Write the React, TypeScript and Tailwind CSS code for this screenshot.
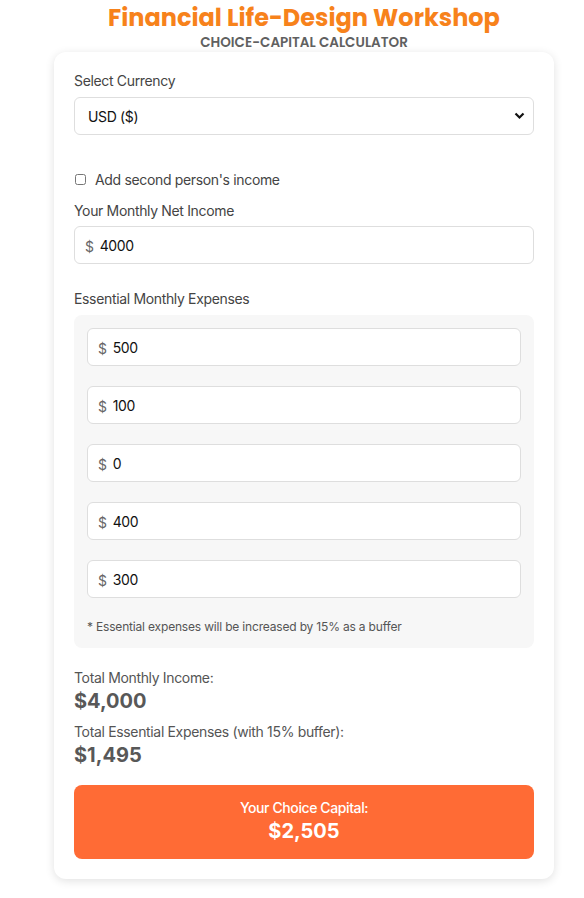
import { useState } from "react";

const expenses = ["500", "100", "0", "400", "300"];

const MoneyInput = ({ value }: { value: string }) => (
  <div className="flex items-center h-[38px] bg-white border border-[#dedede] rounded-md pl-[10px]">
    <span className="text-[14px] text-[#666] mt-[2px] mr-[6px]">$</span>
    <input
      defaultValue={value}
      className="flex-1 h-full bg-transparent outline-none text-[14px] text-[#111]"
    />
  </div>
);

export default function App() {
  const [currency, setCurrency] = useState("USD");

  return (
    <div className="w-[584px] min-h-[898px] bg-white font-['Inter',sans-serif] text-[#333]">
      <div className="mx-[54px] w-[500px] flex flex-col items-center pt-[4px]">
        <h1 className="text-[24px] leading-[28px] font-bold text-[#f7821b] font-['Poppins','Inter',sans-serif]">
          Financial Life-Design Workshop
        </h1>
        <p className="mt-[3px] text-[13.5px] leading-[16px] font-semibold text-[#606060] font-['Poppins','Inter',sans-serif]">
          CHOICE-CAPITAL CALCULATOR
        </p>
      </div>

      <div className="mx-[54px] mt-[1px] w-[500px] bg-white rounded-xl shadow-[0_2px_10px_rgba(0,0,0,0.12)] px-[20px] pt-[20px] pb-[20px] tracking-[-0.34px]">
        <label className="block text-[14px] leading-[18px] text-[#444] mb-[7px]">Select Currency</label>
        <div className="relative">
          <select
            value={currency}
            onChange={(e) => setCurrency(e.target.value)}
            className="w-full h-[38px] appearance-none bg-white border border-[#dedede] rounded-md pl-[13px] text-[14px] text-[#111] outline-none"
          >
            <option value="USD">USD ($)</option>
            <option value="EUR">EUR (€)</option>
            <option value="GBP">GBP (£)</option>
          </select>
          <svg className="absolute right-[9px] top-[15px] pointer-events-none" width="11" height="8" viewBox="0 0 11 8">
            <path d="M1.5 1.5 L5.5 5.5 L9.5 1.5" fill="none" stroke="#111" strokeWidth="2.2" />
          </svg>
        </div>

        <label className="flex items-center mt-[34px] text-[14px] text-[#444]">
          <input type="checkbox" className="w-[11px] h-[11px] ml-[1px] mr-[9px]" />
          Add second person's income
        </label>

        <label className="block text-[14px] leading-[18px] text-[#444] mt-[12px] mb-[6px]">Your Monthly Net Income</label>
        <MoneyInput value="4000" />

        <label className="block text-[14px] leading-[18px] text-[#444] mt-[26px] mb-[7px]">Essential Monthly Expenses</label>
        <div className="bg-[#f7f7f7] rounded-lg px-[13px] pt-[13px] pb-[13px]">
          <div className="flex flex-col gap-[20px]">
            {expenses.map((v, i) => (
              <MoneyInput key={i} value={v} />
            ))}
          </div>
          <p className="text-[12px] leading-[16px] text-[#555] mt-[21px] tracking-[-0.18px]">
            * Essential expenses will be increased by 15% as a buffer
          </p>
        </div>

        <div className="mt-[21px]">
          <p className="text-[14px] leading-[18px] text-[#555]">Total Monthly Income:</p>
          <p className="text-[20px] leading-[28px] font-bold text-[#585858] tracking-normal">$4,000</p>
          <p className="text-[14px] leading-[18px] text-[#555] mt-[8px]">Total Essential Expenses (with 15% buffer):</p>
          <p className="text-[20px] leading-[28px] font-bold text-[#585858] tracking-normal">$1,495</p>
        </div>

        <div className="mt-[16px] h-[74px] bg-[#ff6b35] rounded-lg flex flex-col items-center justify-center text-white">
          <p className="text-[14px] leading-[18px] font-medium tracking-[-0.4px]">Your Choice Capital:</p>
          <p className="text-[20px] leading-[28px] font-bold tracking-normal">$2,505</p>
        </div>
      </div>
    </div>
  );
}
